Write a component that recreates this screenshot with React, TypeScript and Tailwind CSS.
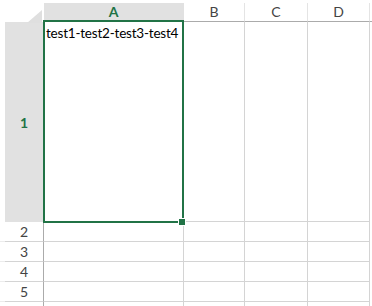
import React from 'react';

const columns = [
  { label: 'A', width: 'w-[140px]', selected: true },
  { label: 'B', width: 'w-[61px]', selected: false },
  { label: 'C', width: 'w-[63px]', selected: false },
  { label: 'D', width: 'w-[62px]', selected: false },
];

const rows = [2, 3, 4, 5];

export default function App() {
  return (
    <div className="relative w-[372px] h-[306px] overflow-hidden bg-white font-['Lato','Open_Sans',sans-serif] text-[14px] text-[#444]">
      {/* Column headers */}
      <div className="h-[3px]" />
      <div className="flex h-[19px]">
        <div className="relative w-[44px] shrink-0">
          <svg className="absolute left-[27px] top-[7px]" width="16" height="13" viewBox="0 0 16 13">
            <polygon points="0,13 15,13 15,0" fill="#dfdfdf" />
          </svg>
        </div>
        {columns.map((c) => (
          <div
            key={c.label}
            className={`${c.width} shrink-0 flex items-center justify-center border-r border-b leading-none ${
              c.selected
                ? 'bg-[#e1e1e1] border-r-[#e1e1e1] border-b-[#217346] text-[#217346] font-bold'
                : 'border-r-[#e4e4e4] border-b-[#ababab]'
            }`}
          >
            {c.label}
          </div>
        ))}
        <div className="flex-1 border-b border-b-[#ababab]" />
      </div>

      {/* Row 1 */}
      <div className="flex h-[200px]">
        <div className="w-[5px] shrink-0" />
        <div className="w-[39px] shrink-0 flex items-center justify-center bg-[#e1e1e1] border-r border-r-[#217346] font-bold text-[#217346]">
          1
        </div>
        {columns.map((c) => (
          <div key={c.label} className={`${c.width} shrink-0 border-r border-r-[#d4d4d4] border-b border-b-[#d4d4d4]`}>
            {c.selected && (
              <div className="pl-[2px] pt-[5px] leading-none text-[13.5px] tracking-[-0.2px] text-black whitespace-nowrap">
                test1-test2-test3-test4
              </div>
            )}
          </div>
        ))}
      </div>

      {/* Rows 2..5 */}
      {rows.map((r) => (
        <div key={r} className="flex h-[20px]">
          <div className="w-[5px] shrink-0 border-b border-b-[#ececec]" />
          <div className="w-[39px] shrink-0 flex items-center justify-center border-r border-r-[#ababab] border-b border-b-[#d4d4d4]">
            {r}
          </div>
          {columns.map((c) => (
            <div key={c.label} className={`${c.width} shrink-0 border-r border-r-[#d4d4d4] border-b border-b-[#d4d4d4]`} />
          ))}
        </div>
      ))}
      <div className="flex h-[10px]">
        <div className="w-[44px] shrink-0 border-r border-r-[#ababab]" />
        {columns.map((c) => (
          <div key={c.label} className={`${c.width} shrink-0 border-r border-r-[#d4d4d4]`} />
        ))}
      </div>

      {/* Selection */}
      <div className="absolute left-[43px] top-[20px] w-[141px] h-[203px] border-2 border-[#217346]" />
      <div className="absolute left-[179px] top-[219px] w-[6px] h-[6px] bg-[#217346] outline outline-1 outline-white" />
    </div>
  );
}
